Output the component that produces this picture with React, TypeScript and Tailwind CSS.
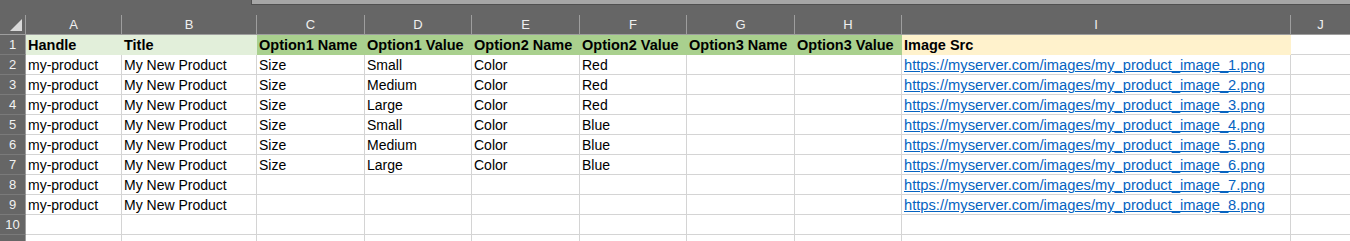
import React from "react";

const COLS =
  "grid grid-cols-[26px_96px_135px_108px_107px_108px_107px_108px_107px_389px_1fr]";

const letters = ["A", "B", "C", "D", "E", "F", "G", "H", "I", "J"];

type Head = { label: string; fill: string };

const headers: Head[] = [
  { label: "Handle", fill: "bg-[#e2efda] border-[#e2efda]" },
  { label: "Title", fill: "bg-[#e2efda] border-[#e2efda]" },
  { label: "Option1 Name", fill: "bg-[#a9d08e] border-[#a9d08e]" },
  { label: "Option1 Value", fill: "bg-[#a9d08e] border-[#a9d08e]" },
  { label: "Option2 Name", fill: "bg-[#a9d08e] border-[#a9d08e]" },
  { label: "Option2 Value", fill: "bg-[#a9d08e] border-[#a9d08e]" },
  { label: "Option3 Name", fill: "bg-[#a9d08e] border-[#a9d08e]" },
  { label: "Option3 Value", fill: "bg-[#a9d08e] border-[#a9d08e]" },
  { label: "Image Src", fill: "bg-[#fff2cc] border-[#fff2cc]" },
];

const rows: string[][] = [
  ["Size", "Small", "Color", "Red"],
  ["Size", "Medium", "Color", "Red"],
  ["Size", "Large", "Color", "Red"],
  ["Size", "Small", "Color", "Blue"],
  ["Size", "Medium", "Color", "Blue"],
  ["Size", "Large", "Color", "Blue"],
  ["", "", "", ""],
  ["", "", "", ""],
];

function Cell({ children, last }: { children?: React.ReactNode; last?: boolean }) {
  return (
    <div
      className={`h-[20px] flex items-center overflow-hidden whitespace-nowrap pl-[2px] pt-[2px] border-b border-[#d4d4d4] ${
        last ? "" : "border-r"
      }`}
    >
      {children}
    </div>
  );
}

function RowNum({ n }: { n?: number }) {
  return (
    <div className="h-[20px] flex items-center justify-center pt-[1px] bg-[#666666] border-r border-b border-r-[#9e9e9e] border-b-[#7a7a7a] text-[13px] text-[#f2f2f2]">
      {n}
    </div>
  );
}

export default function App() {
  return (
    <div className="w-[1350px] h-[241px] overflow-hidden bg-white font-['Liberation_Sans',Arial,sans-serif] text-[14px] text-black">
      {/* top strip */}
      <div className="h-[15px] bg-[#666666] flex">
        <div className="w-[251px]" />
        <div className="flex-1 h-[5px] bg-[#a6a6a6] border-l border-b border-[#505050]" />
      </div>

      {/* column letters */}
      <div className={`${COLS} bg-[#666666] text-[13px] text-[#f0f0f0]`}>
        <div className="h-[20px] flex items-center justify-center border-r border-b border-[#9e9e9e]">
          <svg width="13" height="13" viewBox="0 0 13 13" className="ml-[7px] mt-[2px]">
            <polygon points="12,0 12,12 0,12" fill="#d9d9d9" />
          </svg>
        </div>
        {letters.map((l) => (
          <div
            key={l}
            className="h-[20px] flex items-center justify-center border-r border-b border-[#9e9e9e] last:border-r-0"
          >
            {l}
          </div>
        ))}
      </div>

      {/* row 1: titles */}
      <div className={COLS}>
        <RowNum n={1} />
        {headers.map((h) => (
          <div
            key={h.label}
            className={`h-[20px] flex items-center whitespace-nowrap pl-[2px] pt-[2px] text-[14.5px] font-bold border-r border-b ${h.fill}`}
          >
            {h.label}
          </div>
        ))}
        <Cell last />
      </div>

      {/* data rows */}
      {rows.map((r, i) => (
        <div key={i} className={COLS}>
          <RowNum n={i + 2} />
          <Cell>my-product</Cell>
          <Cell>My New Product</Cell>
          {r.map((v, j) => (
            <Cell key={j}>{v}</Cell>
          ))}
          <Cell />
          <Cell />
          <Cell>
            <span className="text-[14.7px] text-[#0563c1] underline">
              {`https://myserver.com/images/my_product_image_${i + 1}.png`}
            </span>
          </Cell>
          <Cell last />
        </div>
      ))}

      {/* row 10 and the edge of row 11 */}
      {[10, undefined].map((n, k) => (
        <div key={k} className={COLS}>
          <RowNum n={n} />
          {letters.map((l, j) => (
            <Cell key={l} last={j === letters.length - 1} />
          ))}
        </div>
      ))}
    </div>
  );
}
